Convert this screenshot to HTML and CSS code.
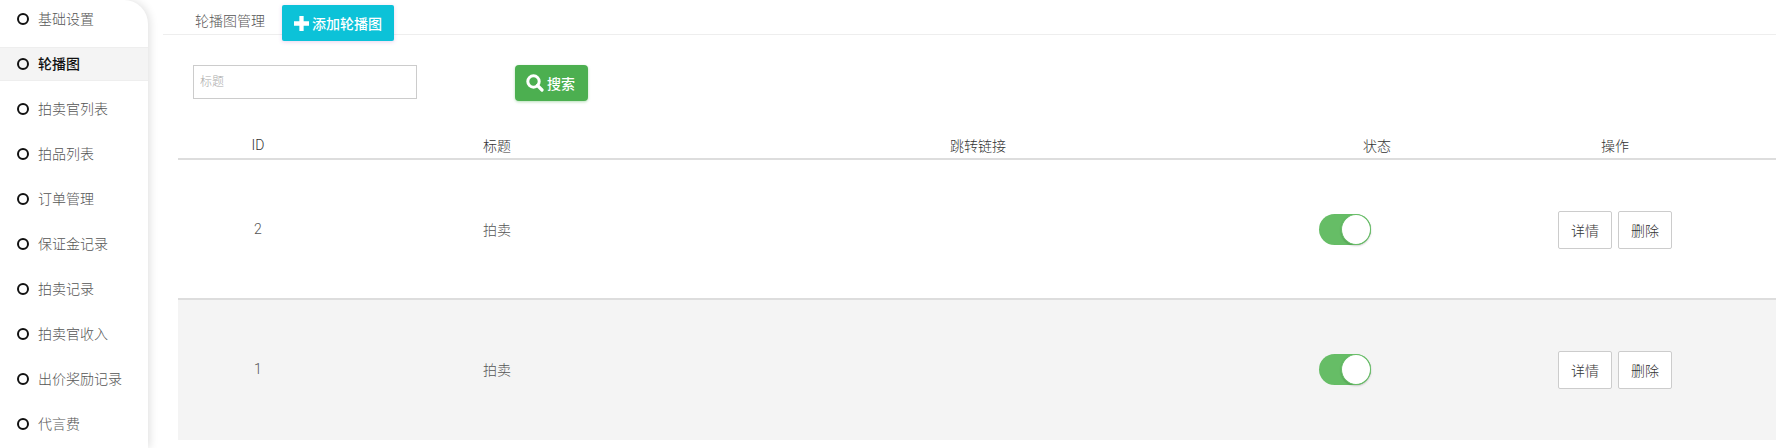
FILE: index.html
```html
<!DOCTYPE html>
<html lang="zh">
<head>
<meta charset="utf-8">
<title>轮播图管理</title>
<link rel="stylesheet" href="styles.css">
</head>
<body>
<div class="page">
  <nav class="sidebar">
    <a class="nav-item"><i class="ring"></i><span>基础设置</span></a>
    <a class="nav-item active"><i class="ring"></i><span>轮播图</span></a>
    <a class="nav-item"><i class="ring"></i><span>拍卖官列表</span></a>
    <a class="nav-item"><i class="ring"></i><span>拍品列表</span></a>
    <a class="nav-item"><i class="ring"></i><span>订单管理</span></a>
    <a class="nav-item"><i class="ring"></i><span>保证金记录</span></a>
    <a class="nav-item"><i class="ring"></i><span>拍卖记录</span></a>
    <a class="nav-item"><i class="ring"></i><span>拍卖官收入</span></a>
    <a class="nav-item"><i class="ring"></i><span>出价奖励记录</span></a>
    <a class="nav-item"><i class="ring"></i><span>代言费</span></a>
  </nav>
  <main class="main">
    <header class="tabs">
      <span class="tab-title">轮播图管理</span>
      <button class="btn-add"><svg class="plus" viewBox="0 0 14 14" width="15" height="15"><path d="M5 0h4v5h5v4H9v5H5V9H0V5h5z" fill="#fff"/></svg>添加轮播图</button>
    </header>
    <form class="search">
      <input class="search-input" type="text" placeholder="标题">
      <button class="btn-search" type="button"><svg viewBox="0 0 18 18" width="18" height="18"><circle cx="7.5" cy="7.5" r="5.7" fill="none" stroke="#fff" stroke-width="3"/><path d="M11.5 11.5L16 16" stroke="#fff" stroke-width="3.2" stroke-linecap="round"/></svg>搜索</button>
    </form>
    <section class="table">
      <div class="row head">
        <div class="cell">ID</div><div class="cell">标题</div><div class="cell">跳转链接</div><div class="cell">状态</div><div class="cell">操作</div>
      </div>
      <div class="row body">
        <div class="cell">2</div><div class="cell">拍卖</div><div class="cell"></div>
        <div class="cell"><span class="switch"><span class="knob"></span></span></div>
        <div class="cell actions"><button class="btn-op">详情</button><button class="btn-op">删除</button></div>
      </div>
      <div class="row body shaded">
        <div class="cell">1</div><div class="cell">拍卖</div><div class="cell"></div>
        <div class="cell"><span class="switch"><span class="knob"></span></span></div>
        <div class="cell actions"><button class="btn-op">详情</button><button class="btn-op">删除</button></div>
      </div>
    </section>
  </main>
</div>
</body>
</html>
```
FILE: styles.css
```css
* { box-sizing: border-box; }
html, body { margin: 0; height: 448px; overflow: hidden; background: #fff; }
body, button, input { font-family: Roboto, "Noto Sans CJK SC", sans-serif; font-size: 14px; font-weight: 300; }
.page { display: flex; height: 448px; }
.sidebar {
  width: 148px; flex: none; height: 448px; padding-top: 2px;
  background: #fff; border-top-right-radius: 24px;
  box-shadow: 2px 0 8px rgba(0,0,0,.12);
  display: flex; flex-direction: column; gap: 11px;
}
.nav-item {
  height: 34px; flex: none; display: flex; align-items: center;
  padding-left: 17px; color: #555; border: solid transparent; border-width: 1px 0;
}
.nav-item span { position: relative; top: -1px; }
.nav-item.active { background: #f4f4f4; border-color: #eee; color: #111; font-weight: 500; }
.ring { width: 12px; height: 12px; border: 2px solid #111; border-radius: 50%; margin-right: 9px; flex: none; }
.main { flex: 1; min-width: 0; padding-left: 15px; }
.tabs {
  height: 35px; border-bottom: 1px solid #eee; display: flex; align-items: flex-start;
  padding: 5px 0 0 32px;
}
.tab-title { color: #555; line-height: 32px; width: 87px; flex: none; }
.btn-add {
  width: 112px; height: 36px; border: 0; border-radius: 2px; background: #0cc2d8; color: #fff;
  font-weight: 500; display: flex; align-items: center; justify-content: center; gap: 3px; padding: 0;
  box-shadow: 0 1px 4px rgba(156,39,176,.2);
}
.search { display: flex; align-items: flex-start; padding: 30px 0 0 30px; height: 99px; }
.search-input {
  width: 224px; height: 34px; border: 1px solid #ccc; padding: 0 6px; font-size: 12px; outline: 0; color: #555;
}
.search-input::placeholder { color: #aaa; }
.btn-search {
  margin-left: 98px; width: 73px; height: 36px; border: 0; border-radius: 4px; background: #4caf50; color: #fff;
  font-weight: 500; display: flex; align-items: center; justify-content: center; gap: 3px; padding: 0 2px 0 0;
  box-shadow: 0 1px 3px rgba(76,175,80,.4);
}
.table { margin-left: 15px; }
.row { display: grid; grid-template-columns: 160px 318px 644px 154px 322px; align-items: center; text-align: center; }
.head { height: 26px; border-bottom: 2px solid #ddd; color: #333; }
.head .cell { padding-bottom: 3px; }
.body { height: 140px; color: #555; border-bottom: 2px solid #ddd; }
.body.shaded { background: #f4f4f4; border-bottom-color: transparent; }
.switch {
  display: inline-block; position: relative; vertical-align: middle; left: -32px; width: 52px; height: 31px;
  border-radius: 16px; background: #66bd66;
}
.knob {
  position: absolute; right: 0; top: 0; width: 30px; height: 31px; border-radius: 50%;
  background: #fff; border: 1px solid #66bd66; box-shadow: 0 1px 2px rgba(0,0,0,.2);
}
.actions { display: flex; justify-content: center; gap: 6px; padding-top: 2px; }
.btn-op {
  width: 54px; height: 38px; background: #fff; border: 1px solid #ccc; border-radius: 2px; color: #333; padding: 0;
}
```
